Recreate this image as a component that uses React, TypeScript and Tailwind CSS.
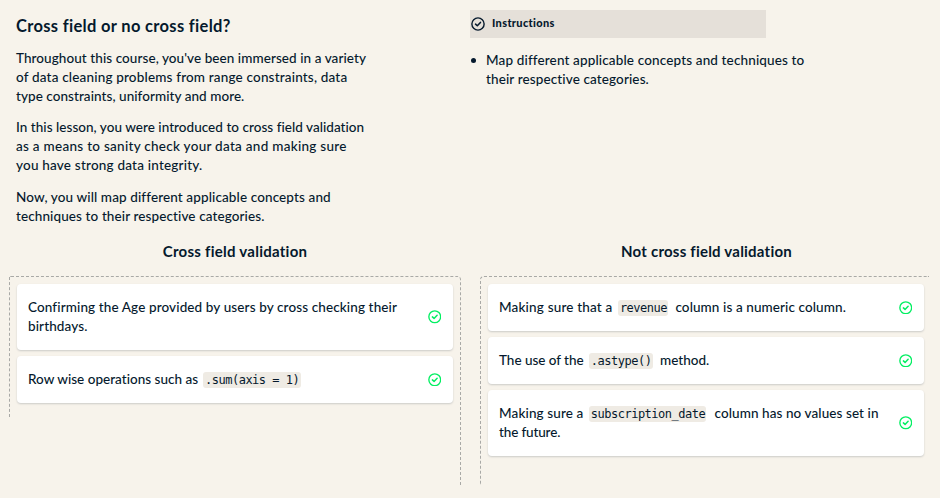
import React from "react";

type LineProps = { track: string; children: React.ReactNode };

function Line({ track, children }: LineProps) {
  return <span className={`block whitespace-nowrap ${track}`}>{children}</span>;
}

function Code({ className, children }: { className: string; children: React.ReactNode }) {
  return (
    <code
      className={`inline-flex h-4 items-center justify-center rounded-[3px] bg-[#efebe4] font-['DejaVu_Sans_Mono',monospace] text-[12px] leading-4 tracking-[-0.5px] whitespace-pre ${className}`}
    >
      {children}
    </code>
  );
}

function CheckCircle({ className }: { className: string }) {
  return (
    <svg viewBox="0 0 16 16" fill="none" stroke="currentColor" className={`shrink-0 ${className}`}>
      <circle cx="8" cy="8" r="7" strokeWidth="1.6" />
      <path d="M5.2 8.2 7.2 10 10.8 6.2" strokeWidth="1.8" strokeLinecap="round" strokeLinejoin="round" />
    </svg>
  );
}

function Card({ children }: { children: React.ReactNode }) {
  return (
    <li className="flex w-[436px] items-center justify-between rounded-[4px] bg-white py-3.5 pl-[11px] pr-3 shadow-[0_1px_2px_rgba(5,25,45,0.18)]">
      <div>{children}</div>
      <CheckCircle className="size-[13.5px] text-[#03ef62]" />
    </li>
  );
}

export default function App() {
  return (
    <main className="h-[498px] w-[940px] overflow-hidden bg-[#f7f3eb] font-['Lato',sans-serif] text-[13.5px] font-medium leading-[19px] text-[#05192d]">
      <section className="flex h-[241px]">
        <article className="w-[470px] pl-4 pt-4">
          <h1 className="whitespace-nowrap text-[16.5px] font-bold leading-5 tracking-[0.32px]">Cross field or no cross field?</h1>
          <p className="mt-[13px]">
            <Line track="tracking-[0.075px]">Throughout this course, you've been immersed in a variety</Line>
            <Line track="tracking-[0.18px]">of data cleaning problems from range constraints, data</Line>
            <Line track="tracking-[0.06px]">type constraints, uniformity and more.</Line>
          </p>
          <p className="mt-3">
            <Line track="tracking-[0.04px]">In this lesson, you were introduced to cross field validation</Line>
            <Line track="tracking-[0.28px]">as a means to sanity check your data and making sure</Line>
            <Line track="tracking-[0.21px]">you have strong data integrity.</Line>
          </p>
          <p className="mt-[13px]">
            <Line track="tracking-[0.12px]">Now, you will map different applicable concepts and</Line>
            <Line track="tracking-[0.11px]">techniques to their respective categories.</Line>
          </p>
        </article>

        <aside className="pt-2.5">
          <h2 className="flex h-7 w-[296px] items-center bg-[#e5e0d9] pl-px text-[11px] font-black leading-4 tracking-[0.34px]">
            <CheckCircle className="size-3.5" />
            <span className="mb-0.5 ml-[7px]">Instructions</span>
          </h2>
          <ul className="mt-[13px]">
            <li className="flex">
              <span className="ml-px mt-[7px] mr-2.5 size-[5px] rounded-full bg-[#05192d]" />
              <div>
                <Line track="tracking-[0.145px]">Map different applicable concepts and techniques to</Line>
                <Line track="tracking-[0.12px]">their respective categories.</Line>
              </div>
            </li>
          </ul>
        </aside>
      </section>

      <section className="flex gap-[19px] pl-[9px]">
        <div className="w-[452px]">
          <h3 className="h-[35px] whitespace-nowrap text-center text-[15px] font-bold leading-5 tracking-[0.26px]">Cross field validation</h3>
          <div className="h-[209px] rounded-tl-[2px] rounded-tr-[4px] border-r border-t border-dashed border-[#a9a9a6]">
            <div className="h-[140px] border-l border-dashed border-[#a9a9a6] pl-[7px] pt-[7px]">
              <ul className="flex flex-col gap-1.5">
                <Card>
                  <Line track="tracking-[0.12px]">Confirming the Age provided by users by cross checking their</Line>
                  <Line track="tracking-[0.12px]">birthdays.</Line>
                </Card>
                <Card>
                  <span className="flex items-center whitespace-nowrap tracking-[0.02px]">
                    Row wise operations such as
                    <Code className="ml-[5px] w-[98px]">.sum(axis = 1)</Code>
                  </span>
                </Card>
              </ul>
            </div>
          </div>
        </div>

        <div className="w-[449px]">
          <h3 className="h-[35px] w-[453px] whitespace-nowrap text-center text-[15px] font-bold leading-5 tracking-[0.22px]">Not cross field validation</h3>
          <div className="h-[209px] rounded-tl-[4px] border-l border-t border-dashed border-[#a9a9a6] pl-[7px] pt-[7px]">
            <ul className="flex flex-col gap-1.5">
              <Card>
                <span className="flex items-center whitespace-nowrap">
                  <span className="tracking-[0.18px]">Making sure that a</span>
                  <Code className="ml-1.5 mr-[7px] w-[50px]">revenue</Code>
                  <span className="tracking-[0.1px]">column is a numeric column.</span>
                </span>
              </Card>
              <Card>
                <span className="flex items-center whitespace-nowrap">
                  <span className="tracking-[-0.03px]">The use of the</span>
                  <Code className="ml-[5.5px] mr-[7px] w-16">.astype()</Code>
                  <span>method.</span>
                </span>
              </Card>
              <Card>
                <span className="flex items-center whitespace-nowrap">
                  <span className="tracking-[0.13px]">Making sure a</span>
                  <Code className="ml-1.5 mr-2 w-[117px]">subscription_date</Code>
                  <span className="tracking-[0.09px]">column has no values set in</span>
                </span>
                <Line track="tracking-[-0.14px]">the future.</Line>
              </Card>
            </ul>
          </div>
        </div>
      </section>
    </main>
  );
}
